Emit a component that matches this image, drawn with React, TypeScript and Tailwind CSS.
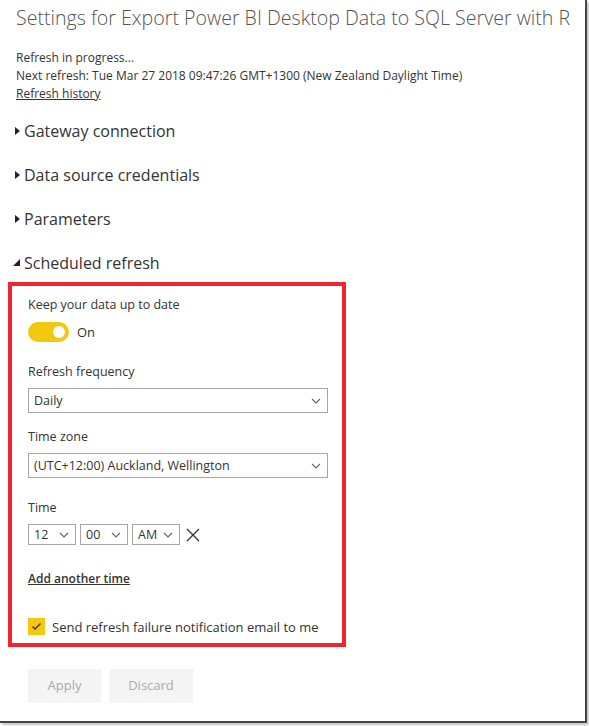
import React from "react";

const font = { fontFamily: '"Open Sans", "Noto Sans", sans-serif' };

function RightTri() {
  return (
    <svg width="8" height="10" viewBox="0 0 8 10" className="shrink-0">
      <path d="M1 1 L6 5 L1 9 Z" fill="#222" />
    </svg>
  );
}

function DownTri() {
  return (
    <svg width="11" height="10" viewBox="0 0 11 10" className="shrink-0">
      <path d="M9 1 L9 8 L2 8 Z" fill="#222" />
    </svg>
  );
}

function Chevron() {
  return (
    <svg width="10" height="6" viewBox="0 0 10 6" className="shrink-0">
      <path d="M1 1 L5 5 L9 1" fill="none" stroke="#666" strokeWidth="1.1" />
    </svg>
  );
}

function Select({ value, className }: { value: string; className: string }) {
  return (
    <div
      className={`flex items-center justify-between border border-[#a6a6a6] bg-white pl-[5px] pr-[6px] text-[12.5px] text-[#333] ${className}`}
    >
      <span className="whitespace-nowrap">{value}</span>
      <Chevron />
    </div>
  );
}

function Header({ label, open }: { label: string; open?: boolean }) {
  return (
    <div className="flex h-[24px] items-center whitespace-nowrap text-[16px] text-[#333]">
      <div className="flex w-[24px] justify-end pr-[2px]">{open ? <DownTri /> : <RightTri />}</div>
      <span>{label}</span>
    </div>
  );
}

export default function App() {
  return (
    <div className="h-[726px] w-[589px] overflow-hidden bg-white" style={font}>
      <div className="h-[723px] w-[587px] border-b-2 border-r-2 border-[#444] bg-white shadow-[2px_2px_3px_rgba(0,0,0,0.25)]">
        <div className="pl-[16px] pt-[3px]">
          <h1 className="h-[30px] whitespace-nowrap text-[19.6px] font-light leading-[30px] text-[#555]">
            Settings for Export Power BI Desktop Data to SQL Server with R
          </h1>
          <div className="mt-[16px] text-[12px] leading-[18px] text-[#333]">
            <div>Refresh in progress...</div>
            <div className="whitespace-nowrap">
              Next refresh: Tue Mar 27 2018 09:47:26 GMT+1300 (New Zealand Daylight Time)
            </div>
            <div className="underline">Refresh history</div>
          </div>
        </div>

        <div className="mt-[16px] flex flex-col gap-[20px]">
          <Header label="Gateway connection" />
          <Header label="Data source credentials" />
          <Header label="Parameters" />
          <Header label="Scheduled refresh" open />
        </div>

        <div className="ml-[8px] mt-[7px] h-[365px] w-[338px] border-4 border-[#f0252d] pl-[16px] pr-[14px] pt-[10px] text-[12.5px] leading-[18px] text-[#333]">
          <div>Keep your data up to date</div>
          <div className="mt-[8px] flex h-[20px] items-center">
            <div className="flex h-[20px] w-[41px] items-center justify-end rounded-full bg-[#f2c811] pr-[4px]">
              <div className="h-[12px] w-[12px] rounded-full bg-white" />
            </div>
            <span className="ml-[8px] text-[13px]">On</span>
          </div>

          <div className="mt-[21px]">Refresh frequency</div>
          <Select value="Daily" className="mt-[7px] h-[25px] w-[300px]" />

          <div className="mt-[15px]">Time zone</div>
          <Select value="(UTC+12:00) Auckland, Wellington" className="mt-[7px] h-[25px] w-[300px]" />

          <div className="mt-[21px]">Time</div>
          <div className="mt-[7px] flex h-[21px] items-center">
            <Select value="12" className="h-[21px] w-[48px]" />
            <Select value="00" className="ml-[4px] h-[21px] w-[48px]" />
            <Select value="AM" className="ml-[4px] h-[21px] w-[48px]" />
            <svg width="14" height="14" viewBox="0 0 14 14" className="ml-[6px]">
              <path d="M1 1 L13 13 M13 1 L1 13" stroke="#333" strokeWidth="1.3" />
            </svg>
          </div>

          <div className="mt-[25px] text-[12px] font-semibold underline">Add another time</div>

          <div className="mt-[30px] flex h-[17px] items-center">
            <div className="flex h-[17px] w-[17px] items-center justify-center bg-[#f2c811]">
              <svg width="11" height="9" viewBox="0 0 11 9">
                <path d="M1.5 4.5 L4 7 L9.5 1.5" fill="none" stroke="#333" strokeWidth="1.3" />
              </svg>
            </div>
            <span className="ml-[7px] whitespace-nowrap text-[13px]">
              Send refresh failure notification email to me
            </span>
          </div>
        </div>

        <div className="ml-[28px] mt-[22px] flex gap-[8px] text-[13px] text-[#aaa]">
          <div className="flex h-[34px] w-[73px] items-center justify-center bg-[#f4f4f4]">Apply</div>
          <div className="flex h-[34px] w-[84px] items-center justify-center bg-[#f4f4f4]">Discard</div>
        </div>
      </div>
    </div>
  );
}
